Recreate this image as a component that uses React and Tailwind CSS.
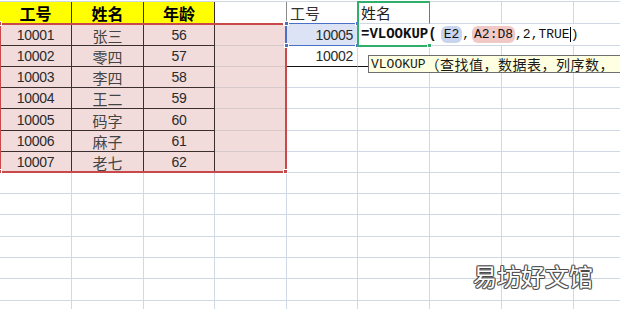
import React from "react";

const GRID = "border-r border-b border-[#d0d7e5]";
const DARK = "border-r border-b border-[#3a2e2e]";
const FONT = "font-['Liberation_Sans','Noto_Sans_CJK_SC',sans-serif]";
const CJK = "font-['Noto_Sans_CJK_SC',sans-serif]";
const MONO = "font-['Liberation_Mono','Noto_Sans_CJK_SC',monospace]";

const people = [
  ["10001", "张三", "56"],
  ["10002", "零四", "57"],
  ["10003", "李四", "58"],
  ["10004", "王二", "59"],
  ["10005", "码字", "60"],
  ["10006", "麻子", "61"],
  ["10007", "老七", "62"],
];

const Num = ({ children }) => (
  <span className="text-[14px] leading-[16px] tracking-[-0.3px] text-[#2a2a2a]">{children}</span>
);

const Name = ({ children }) => (
  <span className={`${CJK} text-[15px] leading-[17px] text-[#444]`}>{children}</span>
);

function HeaderRow() {
  return (
    <>
      {["工号", "姓名", "年龄"].map((t) => (
        <div
          key={t}
          className={`${DARK} bg-[#ffff00] flex items-center justify-center pt-[1px]`}
        >
          <span className={`${CJK} text-[16px] font-bold text-black leading-none`}>{t}</span>
        </div>
      ))}
      <div className="border-r border-b border-r-[#8a8a8a] border-b-[#d0d7e5]" />
      <div className={`${GRID} flex items-center pl-[3px]`}>
        <span className={`${CJK} text-[15px] text-[#333] leading-none`}>工号</span>
      </div>
      <div className="border-r border-b border-r-[#777] border-b-[#d0d7e5] flex items-center pl-[3px]">
        <span className={`${CJK} text-[15px] text-[#222] leading-none`}>姓名</span>
      </div>
      <div className={GRID} />
      <div className={GRID} />
      <div className={GRID} />
    </>
  );
}

function Formula() {
  return (
    <div className="col-span-4 border-b border-[#d0d7e5] flex items-center pl-[3px] whitespace-nowrap text-[#111]">
      <span className={`${MONO} text-[14px] leading-[17px] font-bold`}>=VLOOKUP(</span>
      <span className={`${MONO} text-[13px] ml-[4px] px-[3px] rounded-[6px] bg-[#c9d5ef] leading-[17px]`}>E2</span>
      <span className={`${MONO} text-[13px] leading-[17px]`}>,</span>
      <span className={`${MONO} text-[13px] ml-[2px] px-[2px] rounded-[6px] bg-[#f0c8c6] leading-[17px]`}>A2:D8</span>
      <span className={`${MONO} text-[13px] leading-[17px]`}>,2,TRUE</span>
      <span className="w-px h-[15px] bg-black" />
      <span className={`${MONO} text-[13px] leading-[17px]`}>)</span>
    </div>
  );
}

function DataRow({ row, index }) {
  const [id, name, age] = row;
  return (
    <>
      <div className={`${DARK} bg-[#f2dcdb] flex items-end justify-center pb-[2px]`}>
        <Num>{id}</Num>
      </div>
      <div className={`${DARK} bg-[#f2dcdb] flex items-end justify-center pb-[1px]`}>
        <Name>{name}</Name>
      </div>
      <div className={`${DARK} bg-[#f2dcdb] flex items-end justify-center pb-[2px]`}>
        <Num>{age}</Num>
      </div>
      <div className="border-r border-b border-[#d7c8cc] bg-[#f2dcdb]" />
      {index === 0 && (
        <>
          <div className={`${GRID} bg-[#dce3f4] flex items-end justify-end pr-[4px] pb-[2px]`}>
            <Num>10005</Num>
          </div>
          <Formula />
        </>
      )}
      {index === 1 && (
        <>
          <div className="border-r border-b border-r-[#d0d7e5] border-b-[#111] flex items-end justify-end pr-[4px] pb-[2px]">
            <Num>10002</Num>
          </div>
          <div className="border-r border-b border-r-[#d0d7e5] border-b-[#111]" />
          <div className={GRID} />
          <div className={GRID} />
          <div className={GRID} />
        </>
      )}
      {index > 1 && (
        <>
          <div className={GRID} />
          <div className={GRID} />
          <div className={GRID} />
          <div className={GRID} />
          <div className={GRID} />
        </>
      )}
    </>
  );
}

const Handle = ({ className }) => (
  <div className={`absolute w-[5px] h-[5px] border border-white ${className}`} />
);

export default function App() {
  return (
    <div className={`${FONT} relative w-[620px] h-[309px] overflow-hidden bg-white pt-[1px]`}>
      <div className="grid border-t border-[#d0d7e5] grid-cols-[72px_72px_71px_72px_71px_72px_72px_72px_72px] grid-rows-[22px_22px_21px_21px_21px_22px_21px_21px_21px_21px_22px_21px_21px_22px_21px]">
        <HeaderRow />
        {people.map((p, i) => (
          <DataRow key={p[0]} row={p} index={i} />
        ))}
        {Array.from({ length: 7 * 9 }).map((_, i) => (
          <div key={i} className={GRID} />
        ))}
      </div>

      {/* selected range A2:D8 */}
      <div className="absolute left-[-1px] top-[23px] w-[288px] h-[150px] border-2 border-[#c9484a]" />
      <Handle className="left-[-3px] top-[21px] bg-[#c9484a]" />
      <Handle className="left-[283px] top-[21px] bg-[#c9484a]" />
      <Handle className="left-[283px] top-[169px] bg-[#c9484a]" />
      <Handle className="left-[-3px] top-[169px] bg-[#c9484a]" />

      {/* referenced cell E2 */}
      <div className="absolute left-[286px] top-[23px] w-[72px] h-[23px] border border-[#4a6fc8]" />
      <Handle className="left-[284px] top-[21px] w-[4px] h-[4px] bg-[#4a6fc8]" />
      <Handle className="left-[355px] top-[21px] w-[4px] h-[4px] bg-[#4a6fc8]" />
      <Handle className="left-[284px] top-[43px] w-[4px] h-[4px] bg-[#4a6fc8]" />
      <Handle className="left-[355px] top-[43px] w-[4px] h-[4px] bg-[#4a6fc8]" />

      {/* active cell */}
      <div className="absolute left-[357px] top-[1px] w-[73px] h-[46px] border-l-2 border-t-2 border-b-2 border-[#2fb06a]" />
      <Handle className="left-[427px] top-[43px] bg-[#2fb06a]" />

      {/* function tooltip */}
      <div className="absolute left-[368px] top-[55px] h-[18px] pl-[2px] pr-2 bg-[#ffffe1] border border-[#6e6e6e] flex items-center whitespace-nowrap text-[#1a1a1a]">
        <span className={`${MONO} text-[13px] leading-none`}>VLOOKUP</span>
        <span className={`${CJK} text-[14px] leading-none tracking-[0.5px]`}>（查找值，数据表，列序数，</span>
      </div>

      {/* watermark */}
      <div
        className={`${CJK} absolute left-[473px] top-[264px] text-[24px] leading-none text-white [text-shadow:1px_0_#4a4a4a,-1px_0_#4a4a4a,0_1px_#4a4a4a,0_-1px_#4a4a4a,1px_1px_#888,-1px_-1px_#888,1px_-1px_#888,-1px_1px_#888]`}
      >
        易坊好文馆
      </div>
    </div>
  );
}
